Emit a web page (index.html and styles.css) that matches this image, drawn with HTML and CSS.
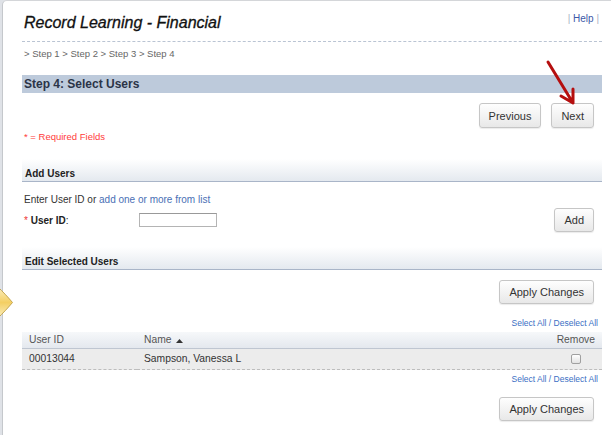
FILE: index.html
```html
<html>
<head>
    <link rel="stylesheet" href="styles.css">
</head>
<body>
    <div class="window">
        <div class="page-header">
            <h1>Record Learning - Financial</h1>
            <div class="help"><span class="pipe">|</span> <a href="#">Help</a> <span class="pipe">|</span></div>
        </div>

        <div class="crumbs">&gt; Step 1 &gt; Step 2 &gt; Step 3 &gt; Step 4</div>

        <h2 class="step-bar">Step 4: Select Users</h2>

        <div class="button-row">
            <button class="btn btn-nav">Previous</button>
            <button class="btn btn-nav">Next</button>
        </div>

        <p class="required">* = Required Fields</p>

        <h3 class="section">Add Users</h3>
        <p class="hint">Enter User ID or <a href="#">add one or more from list</a></p>
        <div class="field-row">
            <label class="field-label"><span class="star">*</span> <b>User ID</b>:</label>
            <input type="text" class="text-input">
            <button class="btn">Add</button>
        </div>

        <h3 class="section">Edit Selected Users</h3>
        <div class="apply-row">
            <button class="btn">Apply Changes</button>
        </div>
        <div class="select-links"><a href="#">Select All</a> / <a href="#">Deselect All</a></div>

        <table class="users">
            <tr>
                <th class="col-id">User ID</th>
                <th>Name <svg class="sort" width="7" height="4" viewBox="0 0 7 4"><path d="M0 4 L3.5 0 L7 4 Z"/></svg></th>
                <th class="col-remove">Remove</th>
            </tr>
            <tr>
                <td>00013044</td>
                <td>Sampson, Vanessa L</td>
                <td class="col-remove"><input type="checkbox" class="check"></td>
            </tr>
        </table>

        <div class="select-links bottom"><a href="#">Select All</a> / <a href="#">Deselect All</a></div>
        <div class="apply-row last">
            <button class="btn">Apply Changes</button>
        </div>
    </div>

    <!-- red pointer drawn over the Next button -->
    <svg class="arrow" width="44" height="52" viewBox="0 0 44 52">
        <path d="M8 6 L33 47 M21 40 L33 47 L33 33" fill="none" stroke="#b50f0f" stroke-width="3" stroke-linecap="round" stroke-linejoin="round"/>
    </svg>

    <!-- yellow tab on the left edge -->
    <svg class="callout" width="14" height="36" viewBox="0 0 14 36">
        <defs>
            <linearGradient id="tab" x1="0" y1="0" x2="0" y2="1">
                <stop offset="0" stop-color="#fbf0c4"/>
                <stop offset="0.5" stop-color="#f4cf63"/>
                <stop offset="1" stop-color="#fbf0c4"/>
            </linearGradient>
        </defs>
        <path d="M-2 3 C3 8 7 12 12.5 18.5 C7 25 3 29 -2 34 Z" fill="url(#tab)" stroke="#c4a650" stroke-width="1"/>
    </svg>
</body>
</html>
```

FILE: styles.css
```css
body {
    margin: 0;
    background: #dfe2e7;
    font-family: "Liberation Sans", Arial, sans-serif;
    color: #333;
}
.window {
    margin-left: 2px;
    height: 434px;
    background: #fff;
    border-left: 1px solid #c5c8cc;
    border-top: 1px solid #d4d6d9;
    border-top-left-radius: 5px;
    padding: 0 9px 0 19px;
}
.page-header {
    display: flex;
    justify-content: space-between;
    align-items: flex-start;
    padding: 12px 3px 8px 2px;
    border-bottom: 1px dashed #bac4d3;
}
h1 {
    margin: 0;
    font-size: 16px;
    font-style: italic;
    font-weight: normal;
    line-height: 20px;
    color: #111;
    -webkit-text-stroke: 0.3px #111;
}
.help {
    font-size: 10px;
    line-height: 12px;
    color: #aab3c4;
}
.help a {
    color: #3c58a8;
    text-decoration: none;
}
.crumbs {
    margin: 6px 0 0 2px;
    font-size: 9.5px;
    line-height: 12px;
    color: #666;
}
.step-bar {
    margin: 15px 0 0;
    height: 18px;
    line-height: 18px;
    padding-left: 2px;
    font-size: 12px;
    background: #bdcadb;
    color: #2b3447;
}
.button-row {
    display: flex;
    justify-content: flex-end;
    gap: 10px;
    padding-right: 8px;
    margin-top: 10px;
}
.btn {
    height: 24px;
    padding: 0 9px;
    font-family: inherit;
    font-size: 11px;
    color: #333;
    background: linear-gradient(#fefefe, #e8e8e8);
    border: 1px solid #c6c6c6;
    border-radius: 3px;
    box-shadow: 0 1px 1px rgba(0, 0, 0, 0.08);
}
.btn-nav {
    height: 25px;
}
.required {
    margin: 3px 0 16px 2px;
    font-size: 9.5px;
    line-height: 12px;
    color: #ff3b3b;
}
.section {
    margin: 0;
    padding: 9px 3px 1px;
    line-height: 12px;
    font-size: 10px;
    font-weight: bold;
    color: #222;
    background: linear-gradient(#fff, #e4e9ef);
    border-bottom: 1px solid #a9b5c8;
}
.hint {
    margin: 12px 0 0 2px;
    font-size: 10px;
    line-height: 12px;
    color: #333;
}
.hint a {
    color: #4a6fb5;
    text-decoration: none;
}
.field-row {
    display: flex;
    align-items: center;
    height: 24px;
    margin: 2px 0 15px;
    padding: 0 8px 0 2px;
}
.field-label {
    width: 115px;
    font-size: 10px;
    color: #222;
}
.star {
    color: #e33;
}
.text-input {
    width: 78px;
    height: 14px;
    box-sizing: border-box;
    margin: 0;
    padding: 0;
    border: 1px solid #b4b4b4;
    border-top-color: #999;
}
.field-row .btn {
    margin-left: auto;
}
.apply-row {
    display: flex;
    justify-content: flex-end;
    padding-right: 8px;
    margin-top: 10px;
}
.apply-row.last {
    margin-top: 13px;
}
.select-links {
    margin-top: 14px;
    padding-right: 4px;
    text-align: right;
    font-size: 8.5px;
    line-height: 10px;
    color: #3a6fc4;
}
.select-links.bottom {
    margin-top: 4px;
}
.select-links a {
    color: #3a6fc4;
    text-decoration: none;
}
.users {
    width: 100%;
    margin-top: 4px;
    border-collapse: collapse;
    font-size: 10.3px;
}
.users th {
    padding: 0 7px;
    line-height: 16px;
    text-align: left;
    font-weight: normal;
    color: #555;
    background: linear-gradient(#f6f8fa, #e4e8ee);
    border-bottom: 1px solid #bfc6d1;
}
.users td {
    padding: 0 7px;
    line-height: 20px;
    color: #333;
    background: #ececec;
    border-bottom: 1px dashed #bdbdbd;
}
.users .col-id {
    width: 101px;
}
.users th.col-remove {
    width: 38px;
    text-align: right;
}
.users td.col-remove {
    text-align: center;
}
.sort {
    margin-left: 2px;
    fill: #333;
}
.check {
    -webkit-appearance: none;
    appearance: none;
    width: 10px;
    height: 10px;
    margin: 0;
    vertical-align: middle;
    border: 1px solid #a0a0a0;
    border-radius: 2px;
    background: linear-gradient(#fff, #e2e2e2);
}
.arrow {
    position: absolute;
    left: 540px;
    top: 56px;
}
.callout {
    position: absolute;
    left: 0;
    top: 284px;
}
```
